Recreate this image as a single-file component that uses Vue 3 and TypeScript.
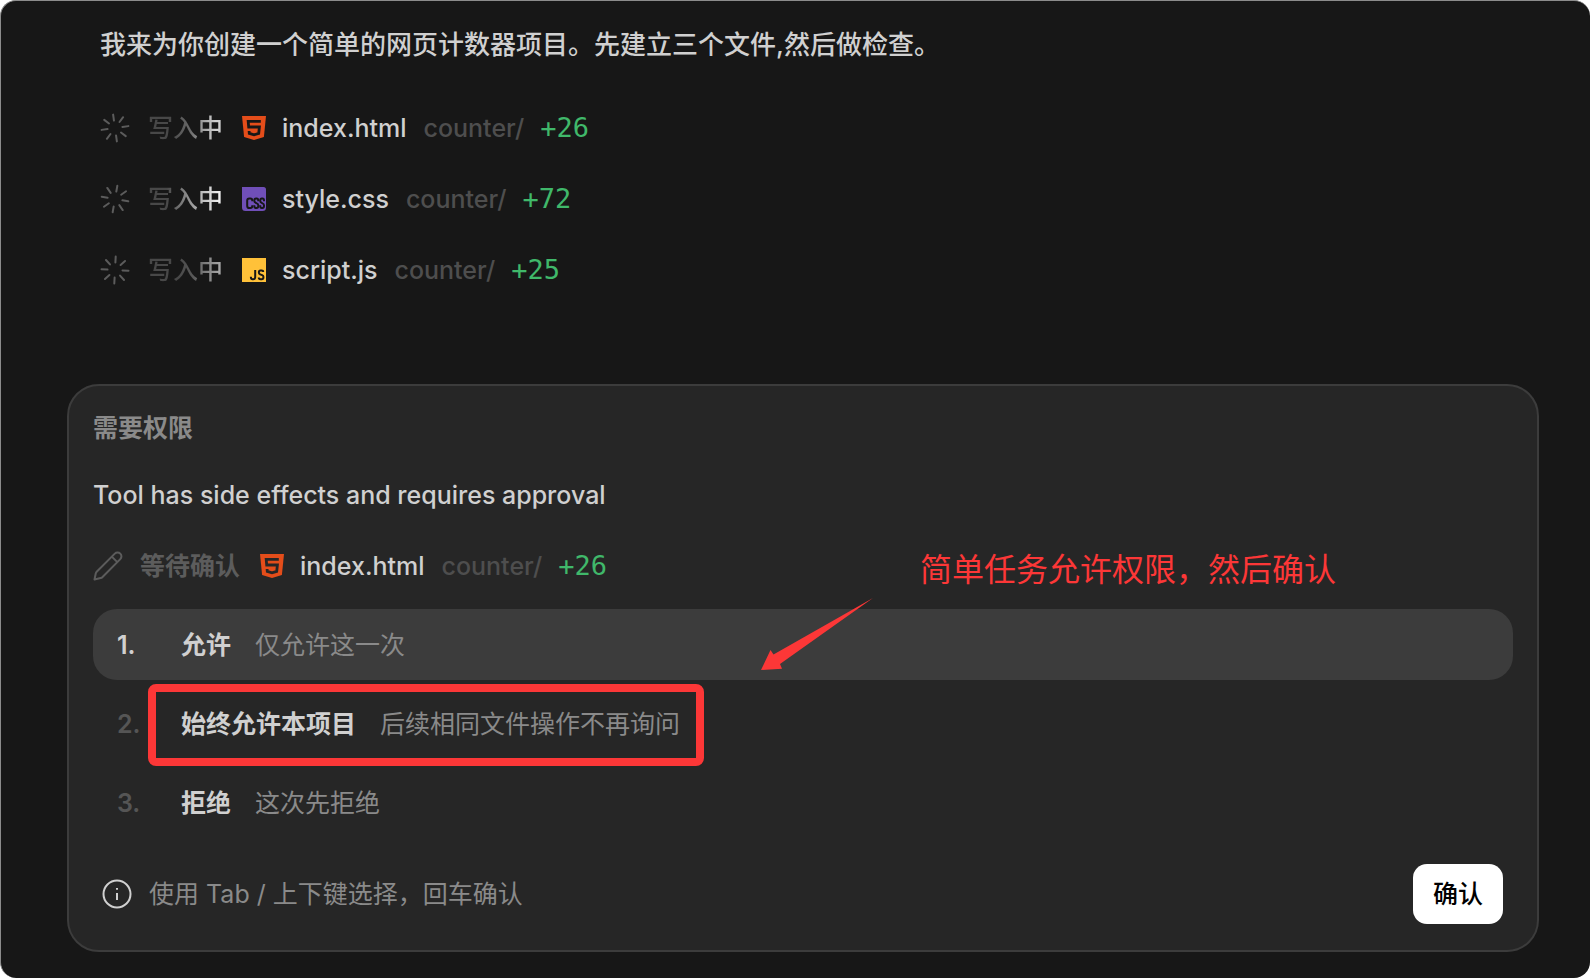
<script setup lang="ts">
import { ref } from 'vue'

interface FileWrite {
  name: string
  kind: 'html' | 'css' | 'js'
  dir: string
  added: number
  angle: number
  glow: string
}

interface Choice {
  id: string
  label: string
  hint: string
  marked?: boolean
}

const files: FileWrite[] = [
  { name: 'index.html', kind: 'html', dir: 'counter/', added: 26, angle: -8, glow: 'mid' },
  { name: 'style.css', kind: 'css', dir: 'counter/', added: 72, angle: 10, glow: 'bright' },
  { name: 'script.js', kind: 'js', dir: 'counter/', added: 25, angle: 3, glow: 'dim' },
]

const choices: Choice[] = [
  { id: 'once', label: '允许', hint: '仅允许这一次' },
  { id: 'always', label: '始终允许本项目', hint: '后续相同文件操作不再询问', marked: true },
  { id: 'deny', label: '拒绝', hint: '这次先拒绝' },
]

const spokes = [0, 45, 90, 135, 180, 225, 270, 315]
const picked = ref('once')
</script>

<template>
  <main class="window">
    <section class="log">
      <p class="intro">我来为你创建一个简单的网页计数器项目。先建立三个文件,然后做检查。</p>
      <ul class="files">
        <li v-for="f in files" :key="f.name" class="file-row">
          <svg class="spinner" viewBox="-15 -15 30 30" aria-hidden="true">
            <g :transform="`rotate(${f.angle})`">
              <line v-for="s in spokes" :key="s" x1="0" y1="-7.5" x2="0" y2="-13.5" :transform="`rotate(${s})`" />
            </g>
          </svg>
          <span class="status" :class="f.glow">写入中</span>
          <svg class="file-icon" viewBox="0 0 24 24" aria-hidden="true">
            <template v-if="f.kind === 'html'">
              <path fill="#e44d1a" d="M0 0h24l-2.1 21L12 24l-9.900-3z" />
              <path class="cut" d="M18.800 5.400H6.200l.5 5.600h10.700l-.7 6.400-4.700 1.500-4.700-1.500-.2-2.400" />
            </template>
            <template v-else-if="f.kind === 'css'">
              <path fill="#704fb8" d="M0 0h21.500a2.500 2.500 0 0 1 2.500 2.500v18a3.500 3.500 0 0 1-3.500 3.500h-17A3.500 3.500 0 0 1 0 20.500z" />
              <g class="css-mark">
                <path d="M10.300 14.200v-.8q0-2-2-2h-1q-2.100 0-2.100 2.100v5.500q0 2.100 2.100 2.100h1q2 0 2-2v-.8" />
                <path d="M16.300 14.200v-.8q0-2-1.700-2h-.5q-1.800 0-1.800 2v.6q0 1.300 2 2.100t2 2.100v.9q0 2-1.800 2h-.5q-1.700 0-1.700-2v-.8" />
                <path d="M22 14.200v-.8q0-2-1.600-2h-.5q-1.700 0-1.700 2v.6q0 1.300 1.900 2.100t1.900 2.100v.9q0 2-1.700 2h-.5q-1.600 0-1.600-2v-.8" />
              </g>
            </template>
            <template v-else>
              <path fill="#ffc139" d="M0 0h24v24H0z" />
              <path class="js-mark" d="M13.200 12v7.300q0 1.900-1.900 1.900h-.7q-1.700 0-1.700-1.900v-.5M21.300 13.900q0-1.400-1.500-1.400h-1.400q-1.500 0-1.500 1.500v.8q0 1 1.200 1.500l2.100.9q1.200.5 1.200 1.600v.8q0 1.600-1.600 1.600h-1.300q-1.700 0-1.700-1.600" />
            </template>
          </svg>
          <span class="name">{{ f.name }}</span>
          <span class="dir">{{ f.dir }}</span>
          <span class="added">+{{ f.added }}</span>
        </li>
      </ul>
    </section>

    <form class="card" @submit.prevent>
      <h2 class="heading">需要权限</h2>
      <p class="reason">Tool has side effects and requires approval</p>
      <div class="pending">
        <svg class="pencil" viewBox="0 0 30 30" aria-hidden="true">
          <path d="M1.500 28.500l1.300-6.200q.2-.9.900-1.600L21.800 2.600a3.800 3.800 0 0 1 5.500 5.500L9.300 26.200q-.7.7-1.600.9zM18.800 5.600l5.500 5.500" />
        </svg>
        <span class="waiting">等待确认</span>
        <svg class="file-icon" viewBox="0 0 24 24" aria-hidden="true">
          <path fill="#e44d1a" d="M0 0h24l-2.100 21L12 24l-9.900-3z" />
          <path class="cut on-card" d="M18.800 5.400H6.200l.5 5.600h10.700l-.7 6.400-4.700 1.500-4.700-1.500-.2-2.400" />
        </svg>
        <span class="name">index.html</span>
        <span class="dir">counter/</span>
        <span class="added">+26</span>
      </div>

      <div class="choices" role="radiogroup" aria-label="需要权限">
        <label v-for="(c, i) in choices" :key="c.id" class="choice" :class="{ active: picked === c.id }">
          <input v-model="picked" class="radio" type="radio" name="permission" :value="c.id" />
          <span class="number">{{ i + 1 }}.</span>
          <span class="texts" :class="{ marked: c.marked }">
            <span class="label">{{ c.label }}</span>
            <span class="hint">{{ c.hint }}</span>
          </span>
        </label>
      </div>

      <footer class="footer">
        <svg class="info" viewBox="0 0 30 30" aria-hidden="true">
          <circle cx="15" cy="15" r="13.500" />
          <path d="M15 14v7M15 9v1.800" />
        </svg>
        <span class="keys">使用 Tab / 上下键选择，回车确认</span>
        <button class="confirm" type="submit">确认</button>
      </footer>

      <p class="note">简单任务允许权限，然后确认</p>
      <svg class="arrow" viewBox="0 0 114 74" aria-hidden="true">
        <path d="M1 73l9.500-20 3 4.500L113 1 20 67l2 4.800z" />
      </svg>
    </form>
  </main>
</template>

<style>
body {
  background: #fff;
}
</style>

<style scoped>
.window {
  box-sizing: border-box;
  min-height: 100vh;
  padding: 26px 51px 26px 66px;
  display: flex;
  flex-direction: column;
  border: 1px solid #8c8c8c;
  border-width: 1px 0 0 1px;
  border-radius: 16px;
  background: #171717;
  color: #d0d0d0;
  font-family: Inter, "Noto Sans CJK SC", sans-serif;
  font-size: 25px;
  line-height: 36px;
}
p, h2, ul {
  margin: 0;
  padding: 0;
}
.log {
  padding-left: 33px;
}
.intro {
  font-size: 26px;
  font-weight: 500;
}
.files {
  margin-top: 29px;
  list-style: none;
}
.file-row {
  display: flex;
  align-items: center;
  height: 71px;
}
.spinner {
  width: 30px;
  height: 30px;
  margin-right: 18px;
  stroke: #5c5c5c;
  stroke-width: 2;
  stroke-linecap: round;
}
.status {
  margin-right: 19px;
  color: transparent;
  background-clip: text;
  font-weight: 500;
}
.mid {
  background-image: linear-gradient(90deg, #484848 30%, #686868 55%, #d0d0d0 90%);
}
.bright {
  background-image: linear-gradient(90deg, #484848 25%, #868686 50%, #f0f0f0 95%);
}
.dim {
  background-image: linear-gradient(90deg, #484848 40%, #585858 60%, #b0b0b0 100%);
}
.file-icon {
  width: 24px;
  height: 24px;
  margin-right: 16px;
}
.cut {
  fill: none;
  stroke: #171717;
  stroke-width: 2.800;
}
.on-card {
  stroke: #262626;
}
.css-mark,
.js-mark {
  fill: none;
  stroke: #171717;
  stroke-width: 2;
}
.name {
  margin-right: 17px;
  font-weight: 500;
}
.dir {
  margin-right: 16px;
  color: #4e4e4e;
  font-weight: 500;
}
.added {
  color: #40b86a;
  font-family: "DejaVu Sans Mono", monospace;
  font-size: 27px;
}
.card {
  position: relative;
  box-sizing: border-box;
  margin-top: auto;
  padding: 24px;
  border: 2px solid #3c3c3c;
  border-radius: 32px;
  background: #262626;
}
.heading {
  color: #8a8a8a;
  font-size: 25px;
  font-weight: 700;
}
.reason {
  margin-top: 31px;
  font-weight: 500;
}
.pending {
  display: flex;
  align-items: center;
  margin-top: 35px;
}
.pencil {
  width: 30px;
  height: 30px;
  margin-right: 17px;
  fill: none;
  stroke: #5c5c5c;
  stroke-width: 2;
  stroke-linejoin: round;
}
.waiting {
  margin-right: 20px;
  color: #5c5c5c;
  font-weight: 600;
}
.choices {
  display: flex;
  flex-direction: column;
  gap: 8px;
  margin-top: 25px;
}
.choice {
  display: flex;
  align-items: center;
  height: 71px;
  padding-left: 24px;
  border-radius: 24px;
  cursor: pointer;
}
.choice.active {
  background: #3c3c3c;
}
.radio {
  position: absolute;
  opacity: 0;
}
.number {
  width: 64px;
  color: #555;
  font-weight: 600;
}
.active .number {
  color: #d0d0d0;
}
.texts {
  position: relative;
  display: flex;
  gap: 24px;
}
.marked::after {
  content: "";
  position: absolute;
  inset: -22px -24px -24px -33px;
  border: 8px solid #fc3737;
  border-radius: 8px;
}
.label {
  font-weight: 700;
}
.hint {
  color: #8a8a8a;
}
.footer {
  display: flex;
  align-items: center;
  margin-top: 26px;
  padding: 0 10px 2px 9px;
}
.info {
  width: 30px;
  height: 30px;
  margin-right: 17px;
  fill: none;
  stroke: #d0d0d0;
  stroke-width: 2;
}
.keys {
  color: #8a8a8a;
}
.confirm {
  margin-left: auto;
  padding: 12px 20px;
  border: 0;
  border-radius: 14px;
  background: #fff;
  color: #000;
  font: inherit;
  font-weight: 500;
  cursor: pointer;
}
.note {
  position: absolute;
  left: 851px;
  top: 160px;
  color: #fc3737;
  font-size: 32px;
  line-height: 48px;
}
.arrow {
  position: absolute;
  left: 691px;
  top: 211px;
  width: 114px;
  height: 74px;
  fill: #fc3737;
}
</style>
